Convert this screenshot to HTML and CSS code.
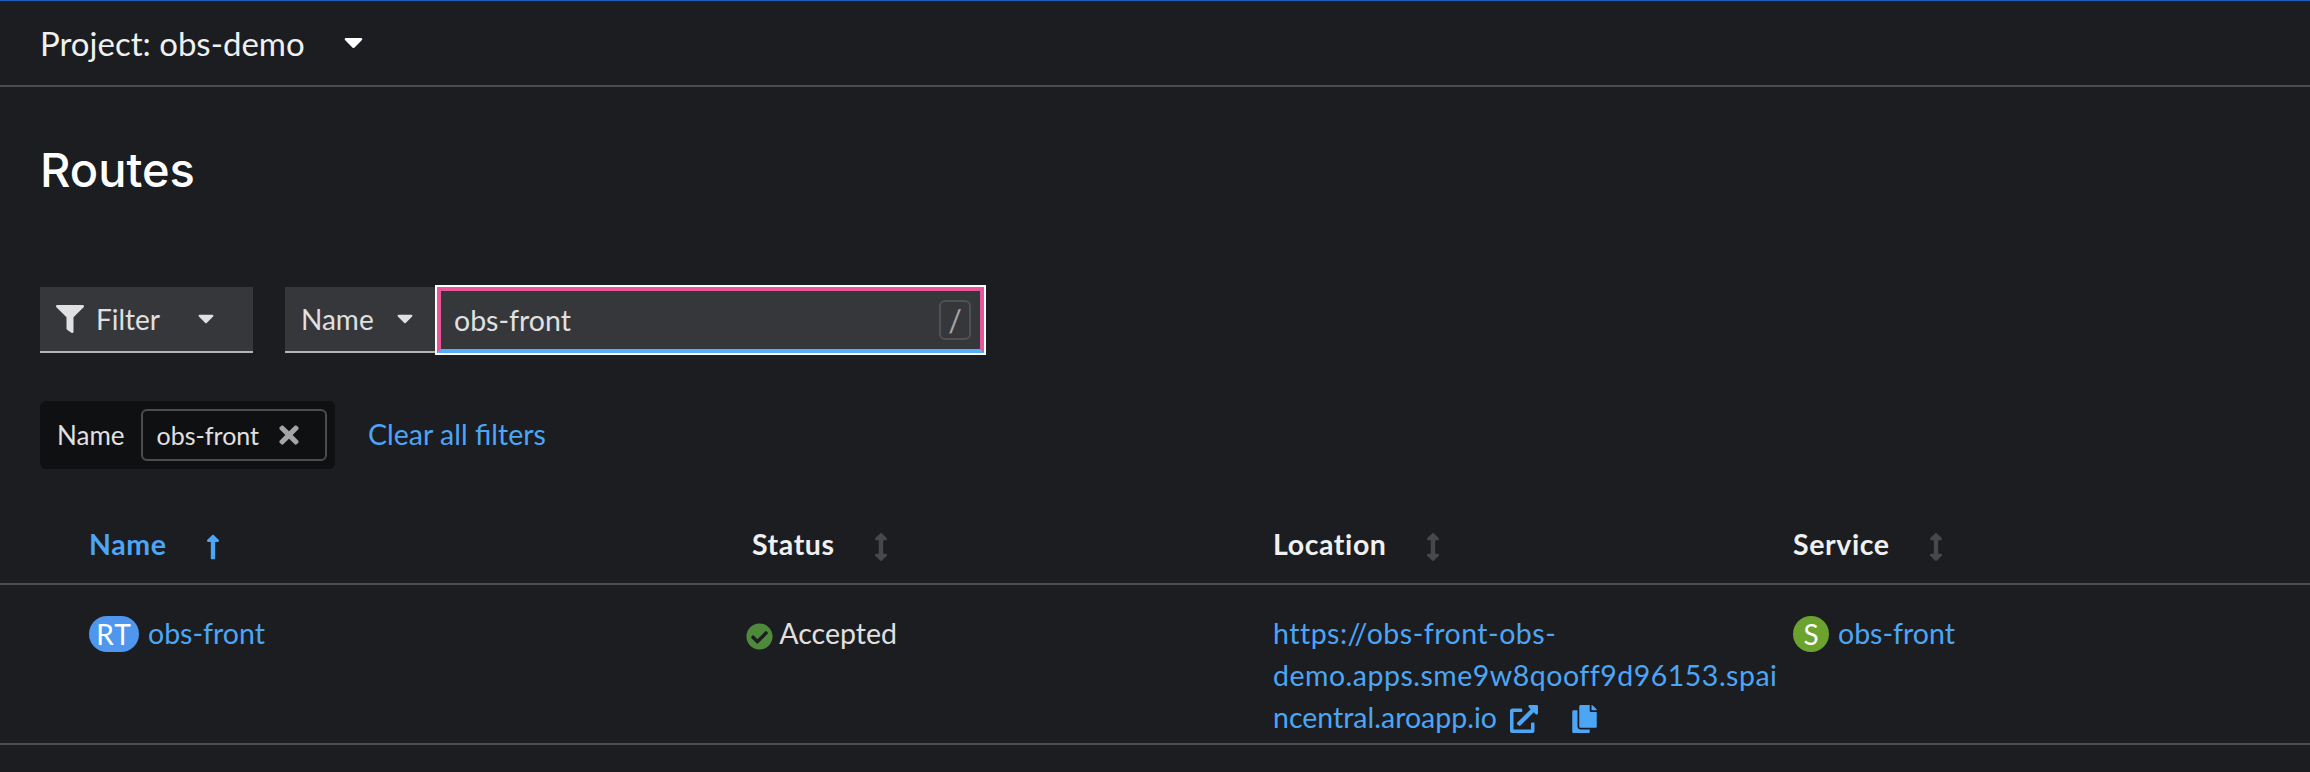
FILE: index.html
```html
<!DOCTYPE html>
<html lang="en">

<head>
    <meta charset="UTF-8">
    <title>Routes</title>
    <link rel="stylesheet" href="styles.css">
</head>

<body>
    <svg class="defs" width="0" height="0">
        <symbol id="caret" viewBox="0 180 320 190"><path d="M31.3 192h257.3c17.8 0 26.7 21.5 14.1 34.1L174.1 354.8c-7.8 7.8-20.5 7.8-28.3 0L17.2 226.1C4.6 213.5 13.5 192 31.3 192z"/></symbol>
        <symbol id="sort" viewBox="0 0 256 512"><path d="M214.059 377.941H168V134.059h46.059c21.382 0 32.09-25.851 16.971-40.971L144.971 7.029c-9.373-9.373-24.569-9.373-33.941 0L24.971 93.088c-15.119 15.119-4.411 40.971 16.971 40.971H88v243.882H41.941c-21.382 0-32.09 25.851-16.971 40.971l86.059 86.059c9.373 9.373 24.569 9.373 33.941 0l86.059-86.059c15.12-15.119 4.412-40.971-16.97-40.971z"/></symbol>
    </svg>

    <div class="project-bar">
        <span class="project-name">Project: obs-demo</span>
        <svg class="caret caret-project"><use href="#caret"/></svg>
    </div>

    <h1>Routes</h1>

    <div class="filter-row">
        <div class="select select-filter">
            <svg class="funnel" viewBox="0 0 512 512"><path d="M487.976 0H24.028C2.71 0-8.047 25.866 7.058 40.971L192 225.941V432c0 7.831 3.821 15.17 10.237 19.662l80 55.98C298.02 518.69 320 507.493 320 487.98V225.941l184.947-184.97C520.021 25.896 509.338 0 487.976 0z"/></svg>
            <span>Filter</span>
            <svg class="caret"><use href="#caret"/></svg>
        </div>
        <div class="select select-name">
            <span>Name</span>
            <svg class="caret"><use href="#caret"/></svg>
        </div>
        <div class="search">
            <span>obs-front</span>
            <span class="slash">/</span>
        </div>
    </div>

    <div class="chips-row">
        <div class="chip-group">
            <span class="chip-label">Name</span>
            <div class="chip">
                <span>obs-front</span>
                <svg class="chip-close" viewBox="0 0 352 512"><path d="M242.72 256l100.07-100.07c12.28-12.28 12.28-32.19 0-44.48l-22.24-22.24c-12.28-12.28-32.19-12.28-44.48 0L176 189.28 75.93 89.21c-12.28-12.28-32.19-12.28-44.48 0L9.21 111.45c-12.28 12.28-12.28 32.19 0 44.48L109.28 256 9.21 356.07c-12.28 12.28-12.28 32.19 0 44.48l22.24 22.24c12.28 12.28 32.2 12.28 44.48 0L176 322.72l100.07 100.07c12.28 12.28 32.2 12.28 44.48 0l22.24-22.24c12.28-12.28 12.28-32.19 0-44.48L242.72 256z"/></svg>
            </div>
        </div>
        <a class="link clear-link">Clear all filters</a>
    </div>

    <table>
        <colgroup>
            <col class="col-name">
            <col class="col-status">
            <col class="col-location">
            <col class="col-service">
        </colgroup>
        <thead>
            <tr>
                <th class="sorted">Name <svg class="sort-icon" viewBox="0 0 256 512"><path d="M88 166.059V468c0 6.627 5.373 12 12 12h56c6.627 0 12-5.373 12-12V166.059h46.059c21.382 0 32.09-25.851 16.971-40.971l-86.059-86.059c-9.373-9.373-24.569-9.373-33.941 0l-86.059 86.059c-15.119 15.119-4.411 40.971 16.971 40.971H88z"/></svg></th>
                <th>Status <svg class="sort-icon"><use href="#sort"/></svg></th>
                <th>Location <svg class="sort-icon"><use href="#sort"/></svg></th>
                <th>Service <svg class="sort-icon"><use href="#sort"/></svg></th>
            </tr>
        </thead>
        <tbody>
            <tr>
                <td><span class="badge badge-rt">RT</span><a class="link">obs-front</a></td>
                <td class="status-cell">
                    <svg class="check" viewBox="0 0 512 512"><path d="M504 256c0 136.967-111.033 248-248 248S8 392.967 8 256 119.033 8 256 8s248 111.033 248 248zM227.314 387.314l184-184c6.248-6.248 6.248-16.379 0-22.627l-22.627-22.627c-6.248-6.249-16.379-6.249-22.628 0L216 308.118l-70.059-70.059c-6.248-6.248-16.379-6.248-22.628 0l-22.627 22.627c-6.248 6.248-6.248 16.379 0 22.627l104 104c6.249 6.25 16.379 6.25 22.628.001z"/></svg>
                    Accepted
                </td>
                <td>
                    <a class="link"><span class="url-wide">https://obs-front-obs-<br>demo.apps.sme9w8qooff9d96153.spai</span><br>ncentral.aroapp.io</a>
                    <svg class="link-icon external" viewBox="0 0 512 512"><path d="M432,320H400a16,16,0,0,0-16,16V448H64V128H208a16,16,0,0,0,16-16V80a16,16,0,0,0-16-16H48A48,48,0,0,0,0,112V464a48,48,0,0,0,48,48H400a48,48,0,0,0,48-48V336A16,16,0,0,0,432,320ZM488,0h-128c-21.37,0-32.05,25.91-17,41l35.73,35.73L135,320.37a24,24,0,0,0,0,34L157.67,377a24,24,0,0,0,34,0L435.28,133.32,471,169c15,15,41,4.5,41-17V24A24,24,0,0,0,488,0Z"/></svg>
                    <svg class="link-icon copy" viewBox="0 0 448 512"><path d="M320 448v40c0 13.255-10.745 24-24 24H24c-13.255 0-24-10.745-24-24V120c0-13.255 10.745-24 24-24h72v296c0 30.879 25.121 56 56 56h168zm0-344V0H152c-13.255 0-24 10.745-24 24v368c0 13.255 10.745 24 24 24h272c13.255 0 24-10.745 24-24V128H344c-13.2 0-24-10.8-24-24zm120.971-31.029L375.029 7.029A24 24 0 0 0 358.059 0H352v96h96v-6.059a24 24 0 0 0-7.029-16.97z"/></svg>
                </td>
                <td><span class="badge badge-s">S</span><a class="link">obs-front</a></td>
            </tr>
        </tbody>
    </table>
</body>

</html>
```

FILE: styles.css
```css
html, body {
    margin: 0;
    padding: 0;
}

body {
    height: 772px;
    overflow: hidden;
    background-color: #1b1d21;
    color: #e0e0e0;
    font-family: Lato, "Noto Sans", sans-serif;
    font-size: 28px;
}

.defs {
    position: absolute;
}

.project-bar {
    display: flex;
    align-items: center;
    height: 84px;
    padding-left: 40px;
    border-top: 1px solid #1f5cc0;
    border-bottom: 2px solid #4b4c4f;
    color: #f0f0f0;
    font-size: 33px;
}

.caret {
    display: block;
    width: 16px;
    height: 10px;
    fill: #e0e0e0;
}

.caret-project {
    width: 19px;
    height: 12px;
    margin-left: 39px;
    fill: #fff;
}

h1 {
    margin: 0;
    padding: 58px 0 0 40px;
    height: 142px;
    color: #fff;
    font-family: Inter, sans-serif;
    font-size: 47px;
    font-weight: 500;
    line-height: 50px;
}

.filter-row {
    display: flex;
    margin-left: 40px;
    height: 66px;
}

.select {
    display: flex;
    align-items: center;
    box-sizing: border-box;
    height: 66px;
    background-color: #36373b;
    border-bottom: 2px solid #b5b5b5;
}

.select-filter {
    width: 213px;
    padding-left: 16px;
    margin-right: 32px;
}

.select-filter span {
    margin-left: 12px;
    margin-right: 38px;
}

.select-name {
    width: 152px;
    padding-left: 16px;
}

.select-name span {
    margin-right: 23px;
}

.funnel {
    width: 28px;
    height: 28px;
    fill: #e0e0e0;
}

.search {
    display: flex;
    align-items: center;
    justify-content: space-between;
    box-sizing: border-box;
    width: 547px;
    height: 66px;
    padding-left: 13px;
    padding-right: 9px;
    background-color: #36373b;
    border: 4px solid #e8569a;
    border-bottom-color: #57aef8;
    outline: 2px solid #fff;
    font-size: 28.5px;
}

.slash {
    display: flex;
    align-items: center;
    justify-content: center;
    box-sizing: border-box;
    width: 32px;
    height: 40px;
    border: 2px solid #4f5053;
    border-radius: 6px;
    color: #a5a5a5;
    font-size: 30px;
}

.chips-row {
    display: flex;
    align-items: center;
    margin: 48px 0 0 40px;
    height: 68px;
}

.chip-group {
    display: flex;
    align-items: center;
    box-sizing: border-box;
    width: 295px;
    height: 68px;
    padding-left: 17px;
    background-color: #0f1012;
    border-radius: 6px;
    font-size: 25px;
}

.chip-label {
    font-size: 26px;
}

.chip {
    display: flex;
    align-items: center;
    box-sizing: border-box;
    width: 186px;
    height: 52px;
    margin-left: 16px;
    padding-left: 14px;
    border: 2px solid #4b4c4f;
    border-radius: 6px;
}

.chip-close {
    width: 20px;
    height: 28px;
    margin-left: 20px;
    fill: #a5a5a5;
}

.link {
    color: #4ca6f5;
}

.clear-link {
    margin-left: 33px;
    padding-bottom: 2px;
    font-size: 28.5px;
}

.url-wide {
    letter-spacing: 0.5px;
}

table {
    width: 100%;
    margin-top: 32px;
    border-collapse: collapse;
    table-layout: fixed;
    font-size: 28.5px;
}

.col-name {
    width: 752px;
}

.col-status {
    width: 521px;
}

.col-location {
    width: 520px;
}

th {
    padding: 5px 0 0;
    border-bottom: 2px solid #4b4c4f;
    color: #f0f0f0;
    font-weight: 700;
    letter-spacing: 0.6px;
    text-align: left;
    vertical-align: top;
    line-height: 77px;
}

th:first-child,
td:first-child {
    padding-left: 89px;
}

.sorted {
    color: #4ca6f5;
}

.sort-icon {
    display: inline-block;
    width: 14px;
    height: 28px;
    margin-left: 32px;
    vertical-align: -6px;
    fill: #47484b;
}

.sorted .sort-icon {
    fill: #4ca6f5;
}

td {
    height: 160px;
    padding: 27px 0 0;
    box-sizing: border-box;
    border-bottom: 2px solid #4b4c4f;
    vertical-align: top;
    line-height: 42px;
}

.badge {
    display: inline-block;
    height: 36px;
    margin-right: 9px;
    border-radius: 18px;
    color: #fff;
    font-size: 28px;
    line-height: 36px;
    text-align: center;
    vertical-align: -1px;
}

.badge-rt {
    width: 50px;
    background-color: #4f97ee;
    letter-spacing: 1px;
}

.badge-s {
    width: 36px;
    background-color: #6ca32e;
}

.status-cell {
    white-space: nowrap;
}

.check {
    width: 27px;
    height: 27px;
    margin-left: -6px;
    vertical-align: -6px;
    fill: #4f8a3c;
}

.link-icon {
    height: 28px;
    vertical-align: -5px;
    fill: #4ca6f5;
}

.external {
    width: 28px;
    margin-left: 6px;
}

.copy {
    width: 25px;
    margin-left: 26px;
}
```
